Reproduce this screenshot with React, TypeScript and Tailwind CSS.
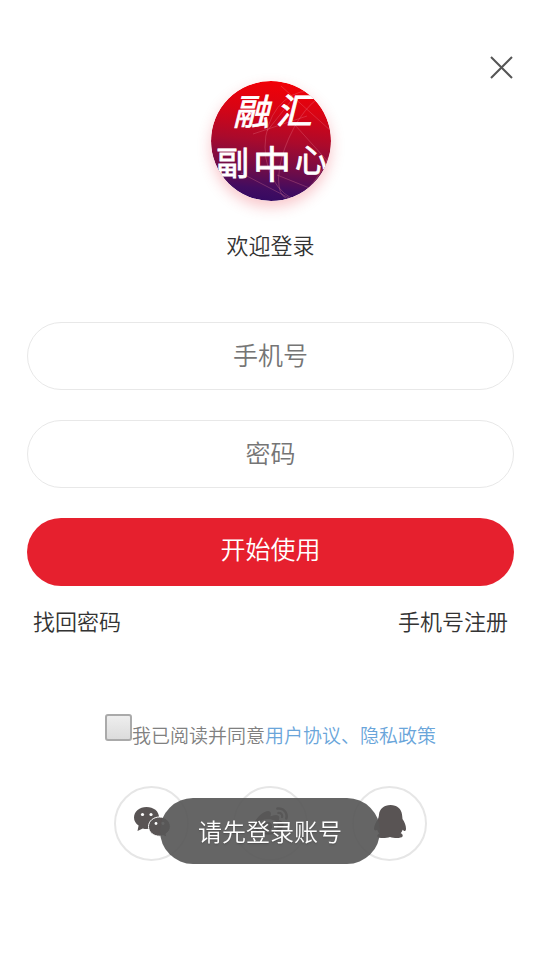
import { useState } from "react";
import { FaWeibo } from "react-icons/fa";

const fieldClass =
  "block h-17 w-full rounded-full border border-[#e8e8e8] bg-white px-6 pb-1 text-center text-[25px] font-[350] text-[#333] placeholder:text-[#757575] outline-none";

function Logo() {
  return (
    <svg viewBox="0 0 120 120" className="size-30 rounded-full shadow-[0_6px_14px_rgba(230,32,46,0.25)]" role="img" aria-label="融汇副中心">
      <defs>
        <linearGradient id="sky" x1="0.55" y1="0" x2="0.45" y2="1">
          <stop offset="0" stopColor="#f20006" />
          <stop offset="0.25" stopColor="#d80414" />
          <stop offset="0.5" stopColor="#aa0a2c" />
          <stop offset="0.75" stopColor="#6c0c4a" />
          <stop offset="0.9" stopColor="#420c60" />
          <stop offset="1" stopColor="#350a62" />
        </linearGradient>
        <clipPath id="disc">
          <circle cx="60" cy="60" r="60" />
        </clipPath>
      </defs>
      <g clipPath="url(#disc)">
        <rect width="120" height="120" fill="url(#sky)" />
        <g fill="none" stroke="#f08a9a" strokeOpacity="0.28">
          <ellipse cx="98" cy="66" rx="44" ry="56" />
          <ellipse cx="98" cy="66" rx="22" ry="56" transform="rotate(24 98 66)" />
          <path d="M70 5l50 45M42 53l54-18M56 50l24-30M84 44l36 40M30 92l50 26M66 94l40 16" />
        </g>
        <g fill="#fff" stroke="#fff" strokeWidth="0.8" fontFamily="'Noto Sans CJK SC', sans-serif" fontWeight="400">
          <text x="22" y="44" fontSize="36" fontStyle="italic">融</text>
          <text x="65" y="43" fontSize="36" fontStyle="italic">汇</text>
          <text x="5" y="94" fontSize="33">副</text>
          <text x="42" y="97" fontSize="38">中</text>
          <text x="84" y="91" fontSize="32">心</text>
        </g>
      </g>
    </svg>
  );
}

function WechatIcon() {
  return (
    <svg viewBox="0 0 38 32" className="h-8 w-[38px]" fill="#595454">
      <path d="M13.500 1C6.500 1 1 5.600 1 11.500c0 3.400 1.800 6.200 4.600 8.100L4.500 25l5.300-2.600c1.400.4 2.200.6 3.700.6 7 0 12.500-5.100 12.500-11.500S20.500 1 13.500 1z" />
      <path d="M26.500 11C20.500 11 15.500 15 15.500 20.600s5 9.600 11 9.600c1.200 0 2.400-.2 3.500-.5l4 1.500-1-3.400c2.700-1.700 4.400-4.100 4.400-7.200 0-5.600-4.900-9.600-10.900-9.600z" stroke="#fff" />
      <g fill="#fff">
        <circle cx="9.500" cy="8.500" r="1.600" />
        <circle cx="18" cy="8.500" r="1.600" />
        <circle cx="23" cy="17.500" r="1.400" />
        <circle cx="30" cy="17.500" r="1.400" />
      </g>
    </svg>
  );
}

function QqIcon() {
  return (
    <svg viewBox="0 0 34 35" className="h-[35px] w-[34px]" fill="#595454">
      <path d="M17.500 1C11 1 6.500 5 6 10.500c-.1 1.800-.5 3-1 4.500C3 18 1 21.500 1 24.500c0 1.800 1 2.500 3.200 1.500.6 1.600 1.200 2.500 2 3.500-1.800.7-2.200 2-1.700 3.200 1 1.800 8.500 1.800 12.500.3 4.500 1.500 11.500 1.300 12.500-.5.600-1.300 0-2.500-1.800-3.200 1-1.200 1.600-2.200 2-3.600 2 2.200 3.300 1.300 3.300-1 0-3.200-1.500-6.700-3.500-9.700 0-1.500-.4-3-.5-4.500C28.500 5 24 1 17.500 1z" />
    </svg>
  );
}

const socials = [
  { name: "微信登录", icon: <WechatIcon /> },
  { name: "微博登录", icon: <FaWeibo size={34} color="#595454" /> },
  { name: "QQ登录", icon: <QqIcon /> },
];

export default function App() {
  const [phone, setPhone] = useState("");
  const [password, setPassword] = useState("");
  const [agreed, setAgreed] = useState(false);

  return (
    <main className="min-h-screen bg-white pt-14 pr-[26px] pb-24 pl-[27px] font-['Noto_Sans_CJK_SC',sans-serif] text-[22px] leading-8 font-[350] text-[#333]">
      <div className="flex justify-end">
        <button type="button" aria-label="关闭" className="cursor-pointer">
          <svg viewBox="0 0 24 24" className="block size-6" stroke="#555" strokeWidth="2">
            <path d="M1 1l21 21M22 1L1 22" />
          </svg>
        </button>
      </div>

      <header className="mt-px flex flex-col items-center gap-[27px]">
        <Logo />
        <h1>欢迎登录</h1>
      </header>

      <form className="mt-[62px]" onSubmit={(e) => e.preventDefault()}>
        <div className="space-y-[30px]">
          <input
            type="tel"
            aria-label="手机号"
            placeholder="手机号"
            value={phone}
            onChange={(e) => setPhone(e.target.value)}
            className={fieldClass}
          />
          <input
            type="password"
            aria-label="密码"
            placeholder="密码"
            value={password}
            onChange={(e) => setPassword(e.target.value)}
            className={fieldClass}
          />
          <button type="submit" className="block h-17 w-full cursor-pointer rounded-full bg-[#e6202e] pb-2 text-[25px] text-white">
            开始使用
          </button>
        </div>

        <div className="mt-[18px] flex justify-between px-1.5">
          <a href="#reset">找回密码</a>
          <a href="#register">手机号注册</a>
        </div>

        <div className="mt-[78px] flex justify-center text-[19px] leading-7 text-[#808080]">
          <input
            id="agree"
            type="checkbox"
            checked={agreed}
            onChange={(e) => setAgreed(e.target.checked)}
            className="size-[27px] appearance-none rounded-[3px] border-2 border-[#aaa] bg-linear-to-b from-[#eee] to-[#dcdcdc] checked:bg-[#e6202e]"
          />
          <p className="mt-[7px]">
            <label htmlFor="agree">我已阅读并同意</label>
            <a href="#terms" className="text-[#6aa5da]">用户协议、隐私政策</a>
          </p>
        </div>
      </form>

      <div className="mt-[37px] flex justify-center gap-11">
        {socials.map((s) => (
          <button
            key={s.name}
            type="button"
            aria-label={s.name}
            className="flex size-[75px] cursor-pointer items-center justify-center rounded-full border-2 border-[#e6e6e6] pb-1"
          >
            {s.icon}
          </button>
        ))}
      </div>

      <div className="pointer-events-none fixed inset-x-0 bottom-24 flex justify-center">
        <div role="status" className="rounded-full bg-[#585858]/92 px-[38px] py-[17px] text-2xl leading-8 text-white text-shadow-sm">
          请先登录账号
        </div>
      </div>
    </main>
  );
}
